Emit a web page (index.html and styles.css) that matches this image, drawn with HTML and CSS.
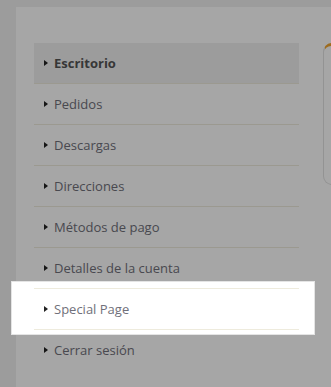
FILE: index.html
```html
<!DOCTYPE html>
<html lang="es">
<head>
  <meta charset="UTF-8">
  <meta name="viewport" content="width=device-width, initial-scale=1.0">
  <title>Mi cuenta</title>
  <link rel="stylesheet" href="styles.css">
</head>
<body>
  <div class="page">
    <main class="account-panel">
      <nav class="account-nav">
        <ul>
          <li class="nav-item is-active"><a href="#">Escritorio</a></li>
          <li class="nav-item"><a href="#">Pedidos</a></li>
          <li class="nav-item"><a href="#">Descargas</a></li>
          <li class="nav-item"><a href="#">Direcciones</a></li>
          <li class="nav-item"><a href="#">Métodos de pago</a></li>
          <li class="nav-item"><a href="#">Detalles de la cuenta</a></li>
          <li class="nav-item is-highlighted"><a href="#">Special Page</a></li>
          <li class="nav-item is-last"><a href="#">Cerrar sesión</a></li>
        </ul>
      </nav>

      <section class="account-card"></section>
    </main>
  </div>

  <!-- tour backdrop -->
  <div class="tour-overlay"></div>
</body>
</html>
```

FILE: styles.css
```css
/* General Styles */
body {
  font-family: "Open Sans", "Liberation Sans", sans-serif;
  margin: 0;
  padding: 0;
  background-color: #f0f0f0;
  color: #70707a;
}

.page {
  height: 100vh;
  padding: 7px 0 0 16px;
  box-sizing: border-box;
  overflow: hidden;
}

.account-panel {
  display: flex;
  gap: 24px;
  background-color: white;
  padding: 36px 0 0 18px;
  height: 100%;
  box-sizing: border-box;
}

/* Navigation */
.account-nav {
  width: 265px;
  flex: none;
}

.account-nav ul {
  list-style: none;
  margin: 0;
  padding: 0;
}

.nav-item a {
  display: flex;
  align-items: center;
  gap: 6px;
  height: 40px;
  padding-left: 10px;
  border-bottom: 1px solid #eeebdd;
  color: #70707a;
  font-size: 13px;
  text-decoration: none;
}

.nav-item a::before {
  content: "";
  border-top: 3px solid transparent;
  border-bottom: 3px solid transparent;
  border-left: 4px solid #222;
}

.nav-item.is-active a {
  background-color: #f0f0f0;
  color: #555;
  font-weight: bold;
}

.nav-item.is-last a {
  border-bottom: none;
}

/* Highlighted step of the tour */
.nav-item.is-highlighted {
  position: relative;
  z-index: 11;
}

.nav-item.is-highlighted::before {
  content: "";
  position: absolute;
  top: -7px;
  bottom: -5px;
  left: -23px;
  right: -16px;
  background-color: white;
  border: 1px solid #e4e4e4;
  z-index: -1;
}

.nav-item.is-highlighted a {
  border-top: 1px solid #eeebdd;
  margin-top: -1px;
}

/* Right side card */
.account-card {
  flex: none;
  width: 120px;
  height: 138px;
  border: 1px solid #e2e2e2;
  border-top: 3px solid #f2a52e;
  border-radius: 9px;
}

.tour-overlay {
  position: fixed;
  inset: 0;
  background-color: rgba(0, 0, 0, 0.35);
  z-index: 10;
}
```
